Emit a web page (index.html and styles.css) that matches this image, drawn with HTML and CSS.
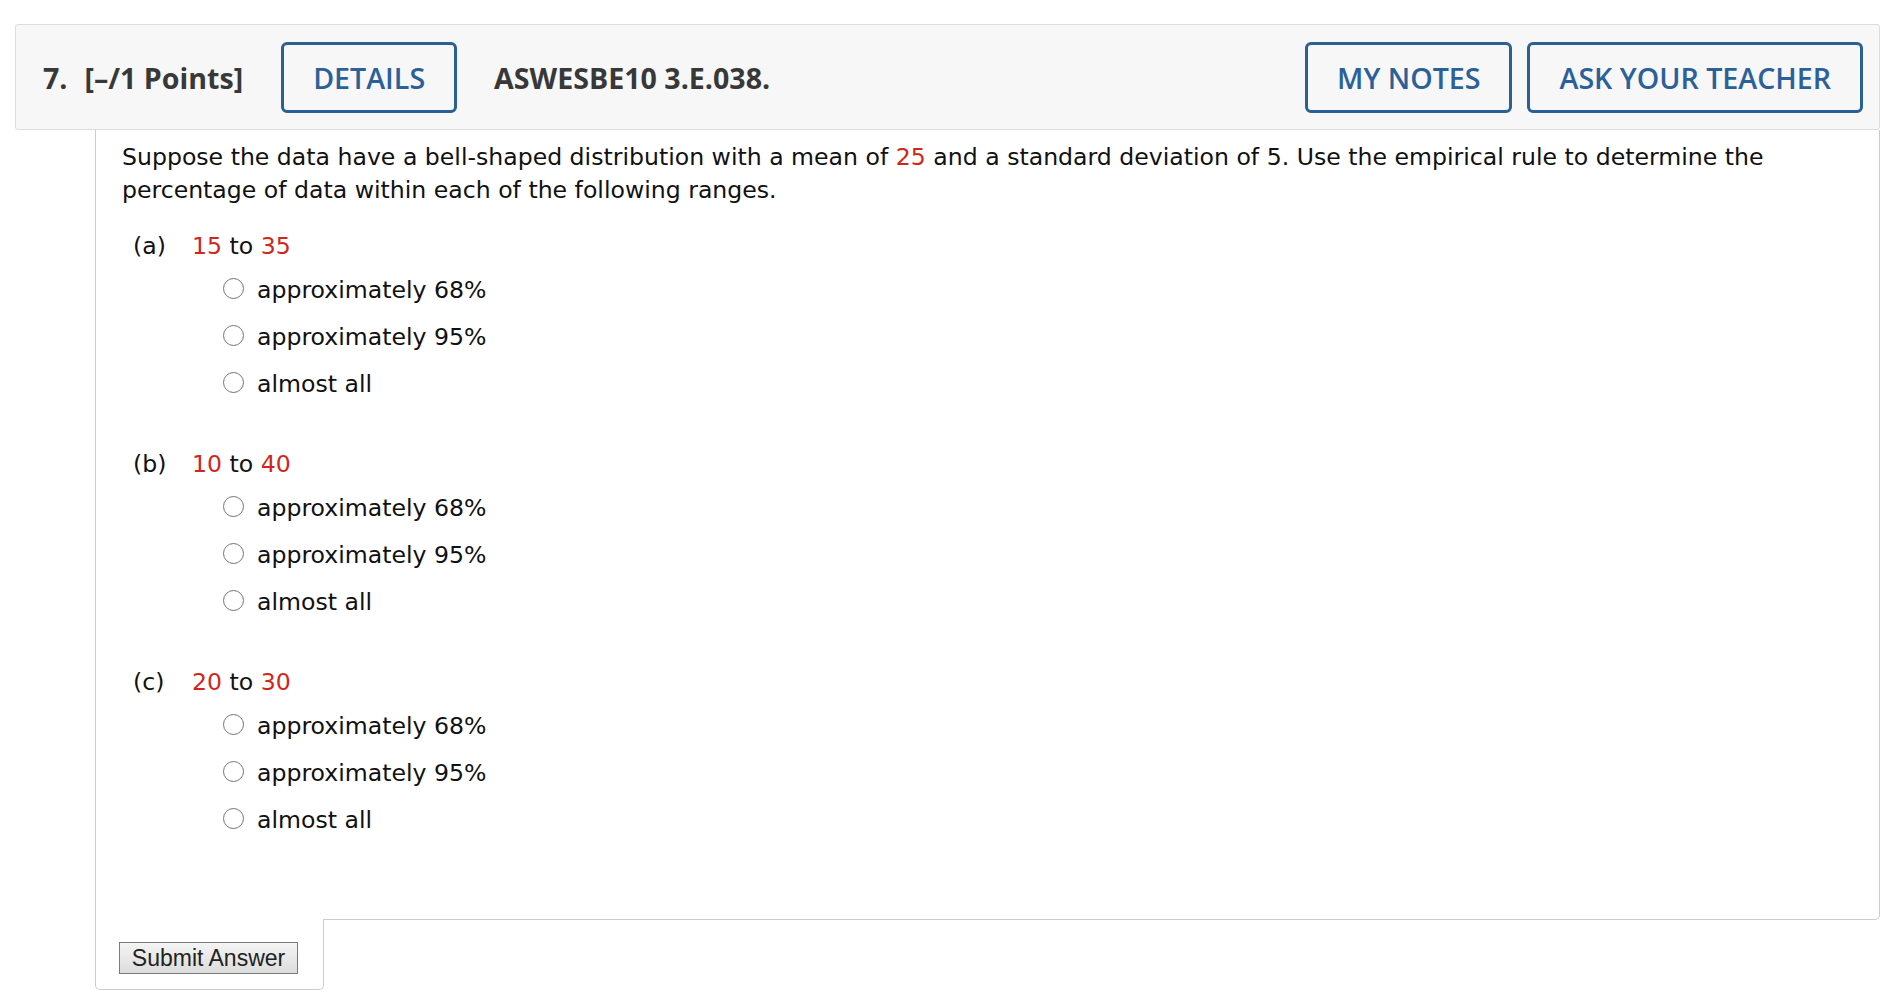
FILE: index.html
```html
<!DOCTYPE html>
<html lang="en">
<head>
<meta charset="utf-8">
<title>ASWESBE10 3.E.038.</title>
<link rel="stylesheet" href="styles.css">
</head>
<body>
<div class="page">
  <div class="q-header">
    <span class="q-num">7.</span>
    <span class="q-points">[–/1 Points]</span>
    <button class="hbtn details" type="button">DETAILS</button>
    <span class="q-title">ASWESBE10 3.E.038.</span>
    <span class="spacer"></span>
    <button class="hbtn" type="button">MY NOTES</button>
    <button class="hbtn" type="button">ASK YOUR TEACHER</button>
  </div>
  <div class="q-body">
    <p class="stem">Suppose the data have a bell-shaped distribution with a mean of <span class="red">25</span> and a standard deviation of 5. Use the empirical rule to determine the percentage of data within each of the following ranges.</p>

    <div class="part">
      <div class="part-label"><span class="letter">(a)</span><span class="red">15</span> to <span class="red">35</span></div>
      <div class="options">
        <label class="option"><input type="radio" name="a"><span>approximately 68%</span></label>
        <label class="option"><input type="radio" name="a"><span>approximately 95%</span></label>
        <label class="option"><input type="radio" name="a"><span>almost all</span></label>
      </div>
    </div>

    <div class="part">
      <div class="part-label"><span class="letter">(b)</span><span class="red">10</span> to <span class="red">40</span></div>
      <div class="options">
        <label class="option"><input type="radio" name="b"><span>approximately 68%</span></label>
        <label class="option"><input type="radio" name="b"><span>approximately 95%</span></label>
        <label class="option"><input type="radio" name="b"><span>almost all</span></label>
      </div>
    </div>

    <div class="part">
      <div class="part-label"><span class="letter">(c)</span><span class="red">20</span> to <span class="red">30</span></div>
      <div class="options">
        <label class="option"><input type="radio" name="c"><span>approximately 68%</span></label>
        <label class="option"><input type="radio" name="c"><span>approximately 95%</span></label>
        <label class="option"><input type="radio" name="c"><span>almost all</span></label>
      </div>
    </div>
  </div>
  <div class="submit-tab">
    <button class="submit" type="button">Submit Answer</button>
  </div>
</div>
</body>
</html>
```

FILE: styles.css
```css
html, body {
  margin: 0;
  padding: 0;
  background: #ffffff;
}

.page {
  margin: 24px 18px 0 15px;
}

.q-header {
  display: flex;
  align-items: center;
  box-sizing: border-box;
  height: 106px;
  padding: 0 16px 0 27px;
  background: #f7f7f7;
  border: 1px solid #dcdcdc;
  border-radius: 3px;
  font-family: "Open Sans", "Liberation Sans", sans-serif;
  color: #383838;
}

.q-num {
  font-size: 28.6px;
  font-weight: 700;
  margin-right: 17px;
}

.q-points {
  font-size: 28.6px;
  font-weight: 700;
}

.q-title {
  font-size: 28.6px;
  font-weight: 700;
  margin-left: 37px;
}

.spacer {
  flex: 1;
}

.hbtn {
  box-sizing: border-box;
  height: 71px;
  padding: 0 29px;
  background: transparent;
  border: 3px solid #2b6094;
  border-radius: 6px;
  font-family: "Open Sans", "Liberation Sans", sans-serif;
  font-size: 28.6px;
  font-weight: 600;
  color: #2b6198;
  cursor: pointer;
}

.hbtn + .hbtn {
  margin-left: 15px;
}

.hbtn.details {
  margin-left: 38px;
}

.q-body {
  margin-left: 80px;
  padding: 11px 25px 82px 26px;
  border: 1px solid #cccccc;
  border-top: none;
  border-radius: 0 0 5px 0;
  font-family: "DejaVu Sans", Verdana, sans-serif;
  font-size: 23.6px;
  line-height: 33px;
  color: #111111;
}

.stem {
  margin: 0;
}

.red {
  color: #d2261c;
}

.part {
  margin-top: 23px;
}

.part + .part {
  margin-top: 47px;
}

.part-label {
  padding-left: 11px;
}

.letter {
  display: inline-block;
  width: 59px;
}

.options {
  margin-top: 11px;
  padding-left: 101px;
}

.option {
  display: flex;
  align-items: center;
}

.option + .option {
  margin-top: 14px;
}

.option input {
  appearance: none;
  -webkit-appearance: none;
  box-sizing: border-box;
  width: 21px;
  height: 21px;
  margin: 0 13px 4px 0;
  border: 1.8px solid #747474;
  border-radius: 50%;
  background: #ffffff;
}

.submit-tab {
  margin: -1px 0 0 80px;
  width: 229px;
  box-sizing: border-box;
  padding: 23px 0 15px 23px;
  background: #ffffff;
  border: 1px solid #cccccc;
  border-top: none;
  border-radius: 0 0 5px 5px;
}

.submit {
  display: block;
  box-sizing: border-box;
  width: 179px;
  height: 32px;
  padding: 0 10px;
  font-family: "Liberation Sans", Arial, sans-serif;
  font-size: 23px;
  color: #222222;
  background: linear-gradient(#f4f4f4, #dcdcdc);
  border: 1px solid #7a7a7a;
  border-radius: 0;
}
```
